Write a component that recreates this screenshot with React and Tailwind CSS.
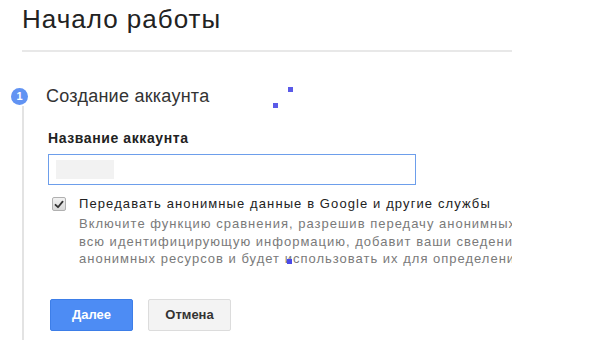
export default function App() {
  return (
    <div className="relative w-[604px] h-[345px] overflow-hidden bg-white font-['Liberation_Sans',Arial,sans-serif]">
      <h1 className="pl-[22px] pt-[4px] text-[26px] leading-[30px] tracking-[1px] text-[#222]">Начало работы</h1>
      <div className="ml-[22px] mt-[16px] h-[2px] w-[490px] bg-[#e8e8e8]" />

      <div className="mt-[34px] flex items-center">
        <div className="ml-[11px] flex h-[17px] w-[17px] items-center justify-center rounded-full bg-[#6193f3] text-[11px] font-bold text-white">1</div>
        <div className="ml-[18px] text-[18px] leading-[20px] tracking-[0.25px] text-[#333]">Создание аккаунта</div>
      </div>

      <div className="ml-[22px] h-[234px] border-l-2 border-[#e3e3e3] pl-[24px] pt-[24px]">
        <div className="text-[14px] font-bold leading-[16px] tracking-[0.6px] text-[#222]">Название аккаунта</div>
        <div className="mt-[8px] flex h-[31px] w-[368px] items-center border border-[#6d9eeb] bg-white pl-[7px]">
          <div className="h-[19px] w-[58px] bg-[#f2f2f2]" />
        </div>

        <div className="mt-[11px] flex">
          <div className="ml-[4px] mt-[1px] flex h-[14px] w-[14px] items-center justify-center rounded-[2px] border border-[#b0b0b0] bg-gradient-to-b from-[#f2f2f2] to-[#d8d8d8]">
            <svg width="10" height="9" viewBox="0 0 10 9">
              <path d="M1.5 4.8 L4 7.2 L8.6 1.6" fill="none" stroke="#333" strokeWidth="1.8" strokeLinecap="round" strokeLinejoin="round" />
            </svg>
          </div>
          <div className="ml-[13px] w-[433px] overflow-hidden">
            <div className="whitespace-nowrap text-[13px] leading-[16px] tracking-[1.1px] text-[#222]">Передавать анонимные данные в Google и другие службы</div>
            <div className="mt-[3px] text-[13px] leading-[17.5px] tracking-[1px] text-[#7a7a7a]">
              <div className="whitespace-nowrap">Включите функцию сравнения, разрешив передачу анонимных данных в Google. Функция сравнения удалит</div>
              <div className="whitespace-nowrap">всю идентифицирующую информацию, добавит ваши сведения к данным сотен тысяч других</div>
              <div className="whitespace-nowrap">анонимных ресурсов и будет использовать их для определения тенденций в отрасли.</div>
            </div>
          </div>
        </div>

        <div className="ml-[2px] mt-[31px] flex gap-[15px]">
          <button className="h-[32px] w-[83px] rounded-[2px] border border-[#3d7ee8] bg-[#4d8cf4] text-[13px] font-bold text-white">Далее</button>
          <button className="h-[32px] w-[83px] rounded-[2px] border border-[#dcdcdc] bg-[#f3f3f3] text-[13px] font-bold text-[#333]">Отмена</button>
        </div>
      </div>

      <div className="absolute left-[288px] top-[87px] h-[5px] w-[5px] bg-[#5a5ae8]" />
      <div className="absolute left-[273px] top-[103px] h-[5px] w-[5px] bg-[#5a5ae8]" />
      <div className="absolute left-[287px] top-[259px] h-[5px] w-[5px] bg-[#4a4ae8]" />
    </div>
  );
}
